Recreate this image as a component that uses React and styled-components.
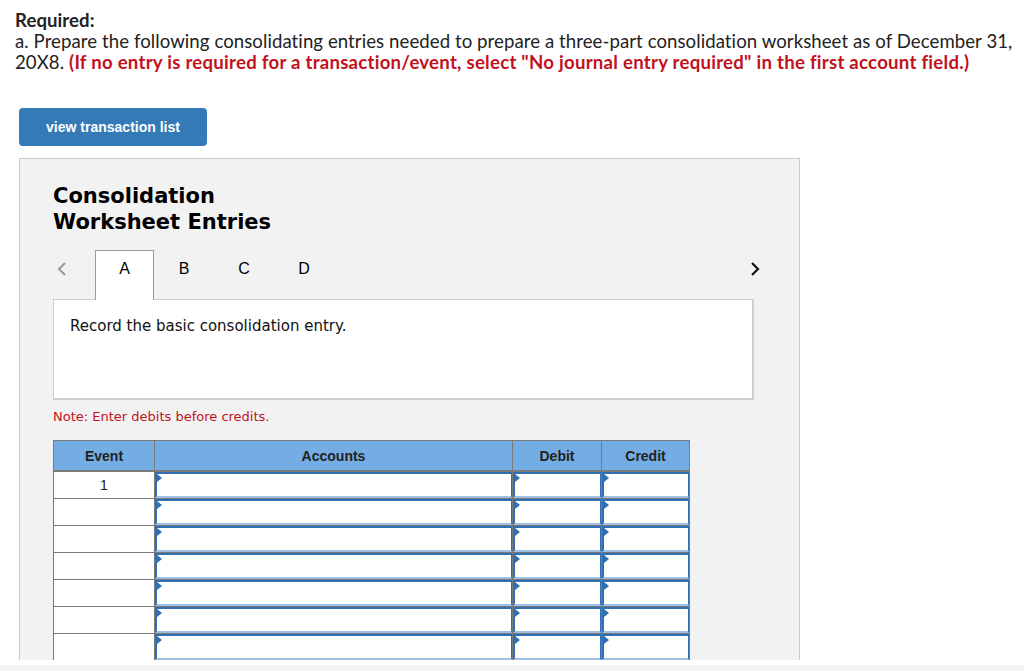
import React from "react";
import styled, { createGlobalStyle } from "styled-components";

const GlobalStyle = createGlobalStyle`
  html, body {
    margin: 0;
    padding: 0;
    background: #fff;
  }
  body {
    font-family: Lato, "Open Sans", sans-serif;
    overflow: hidden;
  }
`;

const Viewport = styled.div`
  height: 660px;
  overflow: hidden;
`;

const BottomStrip = styled.div`
  margin-top: 5px;
  height: 6px;
  background: #f3f3f3;
`;

const Intro = styled.div`
  padding: 10px 0 0 15px;
  font-size: 18.6px;
  line-height: 21px;
  letter-spacing: 0.07px;
  color: #222;
  white-space: nowrap;
`;

const Strong = styled.div`
  font-weight: 700;
`;

const Warn = styled.span`
  color: #c1121c;
  font-weight: 700;
  letter-spacing: 0.26px;
`;

const ViewButton = styled.button`
  display: block;
  margin: 35px 0 0 19px;
  width: 188px;
  height: 38px;
  border: none;
  border-radius: 4px;
  background: #337ab7;
  color: #fff;
  font-family: "Liberation Sans", Arial, sans-serif;
  font-weight: 700;
  font-size: 14px;
  padding: 0;
`;

const Panel = styled.div`
  margin: 12px 0 0 19px;
  width: 781px;
  height: 700px;
  background: #f2f2f2;
  border: 1px solid #c9c9c9;
  padding: 24px 0 0 33px;
  box-sizing: border-box;
`;

const Title = styled.h2`
  margin: 0;
  font-family: "DejaVu Sans", Verdana, sans-serif;
  font-size: 21px;
  line-height: 26px;
  font-weight: 700;
  color: #000;
`;

const TabRow = styled.div`
  display: flex;
  align-items: stretch;
  margin-top: 15px;
  width: 700px;
  height: 49px;
  position: relative;
  z-index: 1;
`;

const Arrow = styled.div`
  width: 42px;
  display: flex;
  justify-content: ${(p) => (p.$right ? "flex-end" : "flex-start")};
  padding-top: 11px;
  padding-left: ${(p) => (p.$right ? "0" : "3px")};
  color: ${(p) => (p.$right ? "#111" : "#999")};
  margin-left: ${(p) => (p.$right ? "auto" : "0")};
  margin-right: ${(p) => (p.$right ? "-8px" : "0")};
  box-sizing: border-box;
`;

const Tab = styled.div`
  width: ${(p) => (p.$active ? "59px" : "60px")};
  text-align: center;
  padding-top: 9px;
  font-family: "Liberation Sans", Arial, sans-serif;
  font-size: 16px;
  color: #000;
  box-sizing: border-box;
  background: ${(p) => (p.$active ? "#fff" : "transparent")};
  border: ${(p) => (p.$active ? "1px solid #9a9a9a" : "1px solid transparent")};
  border-bottom: none;
  height: ${(p) => (p.$active ? "50px" : "49px")};
`;

const Prompt = styled.div`
  width: 701px;
  height: 101px;
  box-sizing: border-box;
  background: #fff;
  border: 1px solid #cfcfcf;
  border-width: 1px 2px 2px 1px;
  padding: 17px 0 0 16px;
  font-family: "DejaVu Sans", Verdana, sans-serif;
  font-size: 15px;
  color: #111;
`;

const Note = styled.div`
  margin-top: 9px;
  font-family: "DejaVu Sans", Verdana, sans-serif;
  font-size: 13px;
  color: #c1121c;
`;

const Table = styled.table`
  margin-top: 16px;
  border-collapse: collapse;
  table-layout: fixed;
  width: 632px;
  border: 1px solid #7a7a7a;
`;

const Th = styled.th`
  width: ${(p) => p.$w}px;
  height: 29px;
  padding: 0;
  background: #74ade3;
  border: 1px solid #7a7a7a;
  border-left-color: #222;
  border-bottom: 2px solid #7a7a7a;
  font-family: "Liberation Sans", Arial, sans-serif;
  font-size: 14px;
  font-weight: 700;
  color: #222;
  &:first-child {
    border-left-color: #7a7a7a;
  }
`;

const Td = styled.td`
  height: 26px;
  padding: 0;
  border: 1px solid #7a7a7a;
  background: #fff;
  text-align: center;
  vertical-align: top;
  font-family: "Liberation Sans", Arial, sans-serif;
  font-size: 14px;
  color: #222;
  line-height: 26px;
`;

const InputCell = styled.td`
  height: 26px;
  padding: 0;
  border: 1px solid #7a7a7a;
  background: #fff;
  vertical-align: top;
`;

const Field = styled.div`
  position: relative;
  height: 26px;
  box-sizing: border-box;
  border: 2px solid #2f6fb2;
  border-right-width: 1px;
  border-bottom-color: #9ec0e4;
  background: #fff;
  &::before {
    content: "";
    position: absolute;
    left: 0;
    top: 0;
    border-left: 5px solid #2f6fb2;
    border-top: 4px solid transparent;
    border-bottom: 4px solid transparent;
  }
`;

const Chevron = ({ dir }) => (
  <svg width="12" height="16" viewBox="0 0 12 16">
    <path
      d={dir === "left" ? "M9 2 L3 8 L9 14" : "M3 2 L9 8 L3 14"}
      fill="none"
      stroke="currentColor"
      strokeWidth={dir === "left" ? 2 : 2.2}
    />
  </svg>
);

const cols = [
  { label: "Event", w: 100 },
  { label: "Accounts", w: 357 },
  { label: "Debit", w: 88 },
  { label: "Credit", w: 87 },
];

export default function App() {
  const rows = [1, 2, 3, 4, 5, 6, 7, 8];
  return (
    <>
      <GlobalStyle />
      <Viewport>
        <Intro>
          <Strong>Required:</Strong>
          a. Prepare the following consolidating entries needed to prepare a three-part consolidation worksheet as of December 31,
          <br />
          20X8.{" "}
          <Warn>
            (If no entry is required for a transaction/event, select "No journal entry required" in the first account field.)
          </Warn>
        </Intro>
        <ViewButton>view transaction list</ViewButton>
        <Panel>
          <Title>
            Consolidation
            <br />
            Worksheet Entries
          </Title>
          <TabRow>
            <Arrow>
              <Chevron dir="left" />
            </Arrow>
            <Tab $active>A</Tab>
            <Tab>B</Tab>
            <Tab>C</Tab>
            <Tab>D</Tab>
            <Arrow $right>
              <Chevron dir="right" />
            </Arrow>
          </TabRow>
          <Prompt>Record the basic consolidation entry.</Prompt>
          <Note>Note: Enter debits before credits.</Note>
          <Table>
            <thead>
              <tr>
                {cols.map((c) => (
                  <Th key={c.label} $w={c.w}>
                    {c.label}
                  </Th>
                ))}
              </tr>
            </thead>
            <tbody>
              {rows.map((r) => (
                <tr key={r}>
                  <Td>{r === 1 ? "1" : ""}</Td>
                  <InputCell>
                    <Field />
                  </InputCell>
                  <InputCell>
                    <Field />
                  </InputCell>
                  <InputCell>
                    <Field />
                  </InputCell>
                </tr>
              ))}
            </tbody>
          </Table>
        </Panel>
      </Viewport>
      <BottomStrip />
    </>
  );
}
